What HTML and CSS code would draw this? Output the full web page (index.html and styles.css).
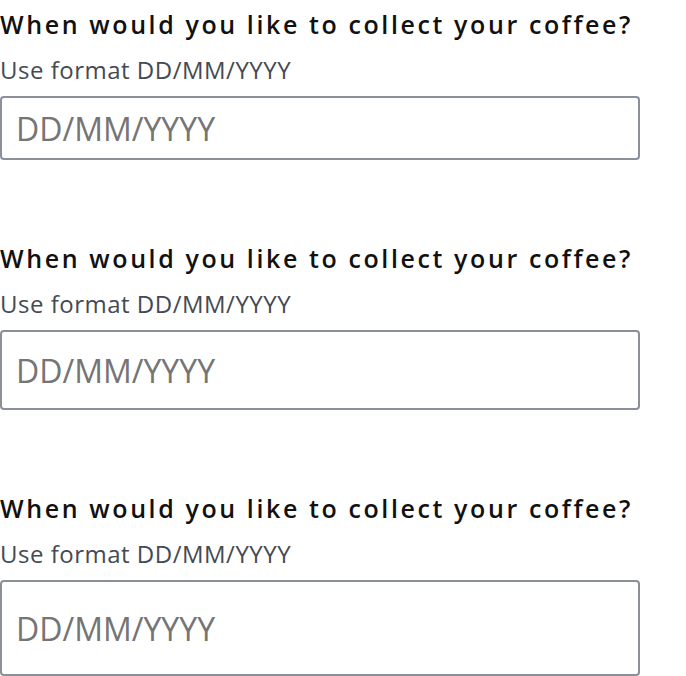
FILE: index.html
```html
<!DOCTYPE html>
<html lang="en">
<head>
<meta charset="utf-8">
<title>Date inputs</title>
<link rel="stylesheet" href="styles.css">
</head>
<body>
<div class="form">
  <div class="field">
    <label class="label" for="d1">When would you like to collect your coffee?</label>
    <div class="hint">Use format DD/MM/YYYY</div>
    <input class="input input-sm" id="d1" type="text" placeholder="DD/MM/YYYY">
  </div>
  <div class="field">
    <label class="label" for="d2">When would you like to collect your coffee?</label>
    <div class="hint">Use format DD/MM/YYYY</div>
    <input class="input input-md" id="d2" type="text" placeholder="DD/MM/YYYY">
  </div>
  <div class="field">
    <label class="label" for="d3">When would you like to collect your coffee?</label>
    <div class="hint">Use format DD/MM/YYYY</div>
    <input class="input input-lg" id="d3" type="text" placeholder="DD/MM/YYYY">
  </div>
</div>
</body>
</html>
```
FILE: styles.css
```css
html, body {
  margin: 0;
  padding: 0;
  background: #ffffff;
}
body {
  font-family: "Open Sans", "Noto Sans", sans-serif;
}
.form {
  display: flex;
  flex-direction: column;
  gap: 74px;
}
.field {
  display: flex;
  flex-direction: column;
  width: 640px;
}
.label {
  font-size: 25px;
  font-weight: 600;
  letter-spacing: 2.6px;
  line-height: 48px;
  color: #111111;
  white-space: nowrap;
}
.hint {
  font-size: 24px;
  font-weight: 500;
  letter-spacing: 0.5px;
  line-height: 44px;
  color: #454a52;
  margin-bottom: 4px;
  white-space: nowrap;
}
.input {
  box-sizing: border-box;
  width: 640px;
  margin: 0;
  border: 2px solid #8a8f98;
  border-radius: 4px;
  font-family: "Open Sans", "Noto Sans", sans-serif;
  font-size: 32px;
  color: #111111;
  padding: 0 14px;
  background: #ffffff;
}
.input::placeholder {
  color: #757575;
  opacity: 1;
}
.input-sm { height: 64px; }
.input-md { height: 80px; }
.input-lg { height: 96px; }
```
